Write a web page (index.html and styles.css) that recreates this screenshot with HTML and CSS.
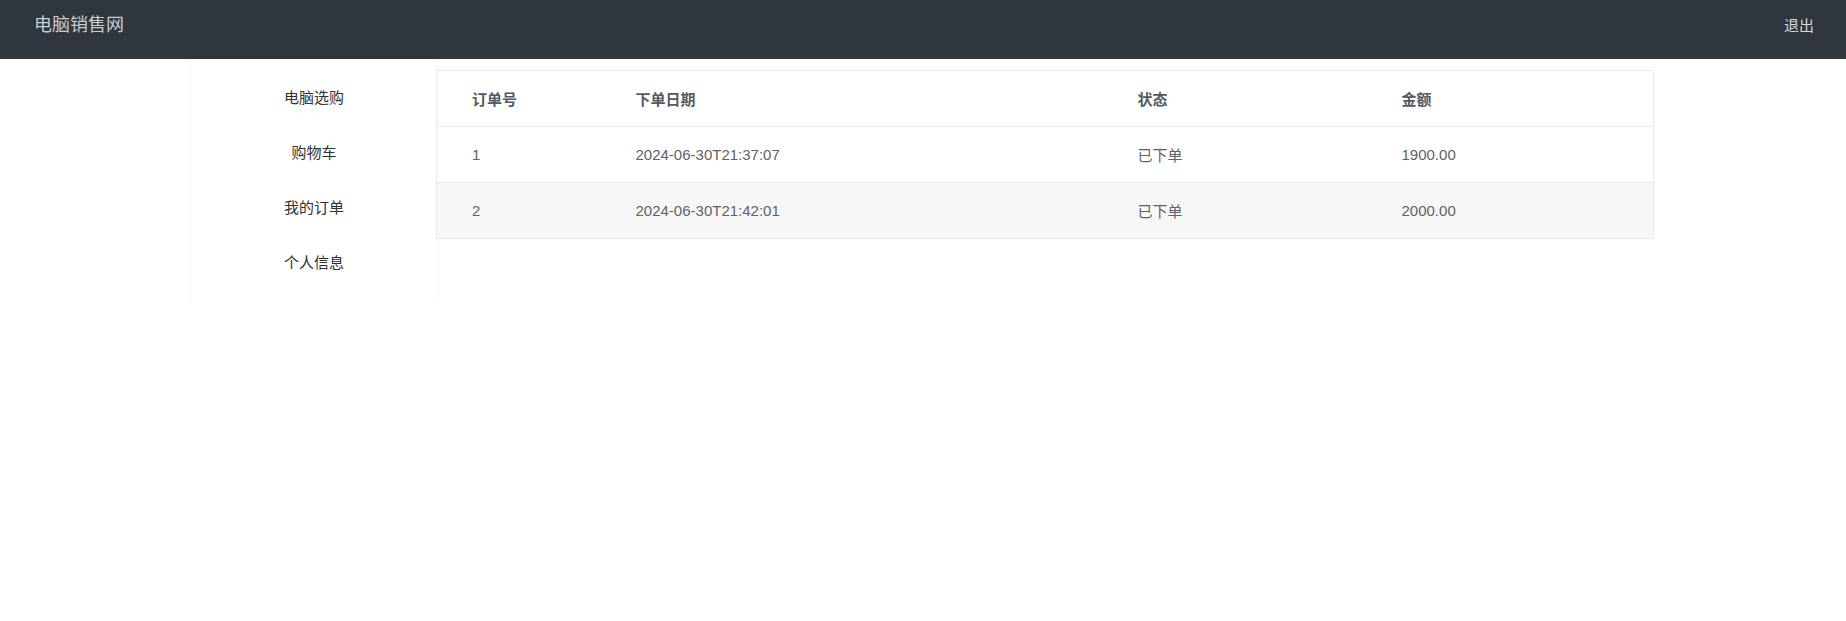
FILE: index.html
```html
<!DOCTYPE html>
<html lang="zh-CN">
<head>
    <meta charset="UTF-8">
    <meta name="viewport" content="width=device-width, initial-scale=1.0">
    <title>我的订单</title>
    <link rel="stylesheet" href="styles.css">
</head>
<body>
    <header class="topbar">
        <div class="brand">电脑销售网</div>
        <a class="logout" href="#">退出</a>
    </header>
    <div class="main">
        <nav class="side-menu">
            <a class="menu-item" href="#">电脑选购</a>
            <a class="menu-item" href="#">购物车</a>
            <a class="menu-item" href="#">我的订单</a>
            <a class="menu-item" href="#">个人信息</a>
        </nav>
        <div class="content">
            <table class="order-table">
                <colgroup>
                    <col class="col-id">
                    <col class="col-date">
                    <col class="col-status">
                    <col>
                </colgroup>
                <thead>
                    <tr>
                        <th>订单号</th>
                        <th>下单日期</th>
                        <th>状态</th>
                        <th>金额</th>
                    </tr>
                </thead>
                <tbody>
                    <tr>
                        <td>1</td>
                        <td>2024-06-30T21:37:07</td>
                        <td>已下单</td>
                        <td>1900.00</td>
                    </tr>
                    <tr class="striped">
                        <td>2</td>
                        <td>2024-06-30T21:42:01</td>
                        <td>已下单</td>
                        <td>2000.00</td>
                    </tr>
                </tbody>
            </table>
        </div>
    </div>
</body>
</html>
```

FILE: styles.css
```css
body {
    margin: 0;
    font-family: "Liberation Sans", "Noto Sans CJK SC", sans-serif;
    color: #606266;
    background: #fff;
}
.topbar {
    height: 59px;
    background-color: #2f363e;
    display: flex;
    justify-content: space-between;
    align-items: flex-start;
    padding: 0 32px 0 34px;
    box-sizing: border-box;
}
.brand {
    font-size: 18px;
    line-height: 51px;
    color: #c8ced6;
}
.logout {
    font-size: 15px;
    line-height: 51px;
    color: #d5dae0;
    text-decoration: none;
}
.main {
    width: 1462px;
    margin: 0 auto;
    display: flex;
    align-items: flex-start;
}
.side-menu {
    width: 244px;
    flex-shrink: 0;
    padding: 11px 0;
    display: flex;
    flex-direction: column;
    background: #fff;
    border-radius: 4px;
    box-shadow: 0 1px 6px rgba(0, 0, 0, 0.06);
}
.menu-item {
    height: 55px;
    line-height: 55px;
    text-align: center;
    font-size: 15px;
    color: #303133;
    text-decoration: none;
}
.content {
    flex: 1;
    padding-top: 11px;
}
.order-table {
    width: 100%;
    border-collapse: collapse;
    border: 1px solid #ebebeb;
    font-size: 15px;
}
.col-id { width: 164px; }
.col-date { width: 502px; }
.col-status { width: 264px; }
.order-table th,
.order-table td {
    height: 55px;
    padding: 0 0 0 35px;
    text-align: left;
    border-bottom: 1px solid #ebebeb;
}
.order-table th {
    font-weight: bold;
    color: #555a60;
}
.order-table td {
    color: #606266;
}
.order-table .striped td {
    background-color: #f7f7f7;
}
```
